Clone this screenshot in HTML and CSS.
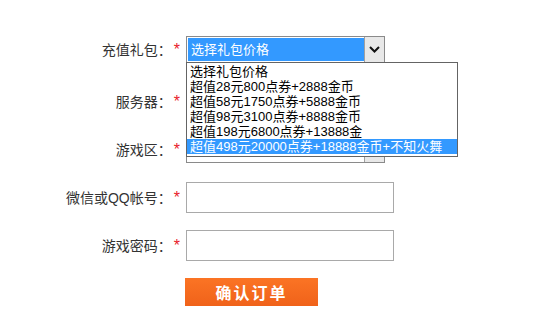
FILE: index.html
```html
<!DOCTYPE html>
<html lang="zh-CN">
<head>
    <meta charset="UTF-8">
    <meta name="viewport" content="width=device-width, initial-scale=1.0">
    <title>确认订单</title>
    <link rel="stylesheet" href="styles.css">
</head>
<body>
    <form class="order-form">
        <div class="row row-first">
            <label class="label">充值礼包：<em>*</em></label>
            <div class="select is-open">
                <span class="select-value">选择礼包价格</span>
                <span class="select-arrow">
                    <svg width="11" height="7" viewBox="0 0 11 7"><path d="M1 1 L5.5 5.5 L10 1" fill="none" stroke="#111" stroke-width="2"/></svg>
                </span>
                <ul class="select-list">
                    <li>选择礼包价格</li>
                    <li>超值28元800点券+2888金币</li>
                    <li>超值58元1750点券+5888金币</li>
                    <li>超值98元3100点券+8888金币</li>
                    <li>超值198元6800点券+13888金</li>
                    <li class="active">超值498元20000点券+18888金币+不知火舞</li>
                </ul>
            </div>
        </div>

        <div class="row">
            <label class="label">服务器：<em>*</em></label>
            <div class="select">
                <span class="select-value"></span>
                <span class="select-arrow"></span>
            </div>
        </div>

        <div class="row">
            <label class="label">游戏区：<em>*</em></label>
            <div class="select">
                <span class="select-value"></span>
                <span class="select-arrow"></span>
            </div>
        </div>

        <div class="row">
            <label class="label">微信或QQ帐号：<em>*</em></label>
            <input type="text" class="text-input">
        </div>

        <div class="row">
            <label class="label">游戏密码：<em>*</em></label>
            <input type="password" class="text-input">
        </div>

        <button type="button" class="submit-btn">确认订单</button>
    </form>
</body>
</html>
```

FILE: styles.css
```css
/* Estilo geral */
body {
    margin: 0;
    background: #fff;
    font-family: "Liberation Sans", "Noto Sans CJK SC", sans-serif;
    color: #333;
}

.order-form {
    padding-top: 25px;
}

/* Linhas do formulário */
.row {
    display: flex;
    align-items: center;
    height: 48px;
}

.row-first {
    margin-bottom: 4px;
}

.label {
    width: 186px;
    box-sizing: border-box;
    padding-right: 6px;
    text-align: right;
    font-size: 14px;
    color: #333;
}

.label em {
    font-style: normal;
    font-size: 16px;
    color: #e8202a;
    margin-left: 2px;
}

/* Select */
.select {
    position: relative;
    display: flex;
    width: 199px;
    height: 27px;
    box-sizing: border-box;
    border: 1px solid #8a8a8a;
    background: #fff;
}

.select-value {
    flex: 1;
    margin: 1px 0 1px 1px;
    padding-left: 3px;
    font-size: 13px;
    line-height: 23px;
}

.select.is-open .select-value {
    background: #3399ff;
    color: #fff;
}

.select-arrow {
    width: 19px;
    display: flex;
    align-items: center;
    justify-content: center;
    border-left: 1px solid #a0a0a0;
    background: #e8e8e8;
}

.select-list {
    position: absolute;
    top: 25px;
    left: -1px;
    z-index: 5;
    width: 272px;
    box-sizing: border-box;
    margin: 0;
    padding: 1px 0 2px;
    list-style: none;
    border: 1px solid #646464;
    background: #fff;
}

.select-list li {
    height: 15px;
    line-height: 15px;
    padding-left: 3px;
    font-size: 13px;
    color: #000;
    white-space: nowrap;
}

.select-list li.active {
    background: #3399ff;
    color: #fff;
}

/* Inputs */
.text-input {
    width: 208px;
    height: 31px;
    box-sizing: border-box;
    margin: 0;
    border: 1px solid #a9a9a9;
    background: #fff;
}

/* Botão */
.submit-btn {
    display: block;
    margin: 9px 0 0 185px;
    width: 133px;
    height: 28px;
    border: none;
    background: linear-gradient(#fb7424, #f0621a);
    color: #fff;
    font-family: "Noto Sans CJK SC", sans-serif;
    font-size: 16px;
    font-weight: bold;
    letter-spacing: 2px;
    cursor: pointer;
}
```
